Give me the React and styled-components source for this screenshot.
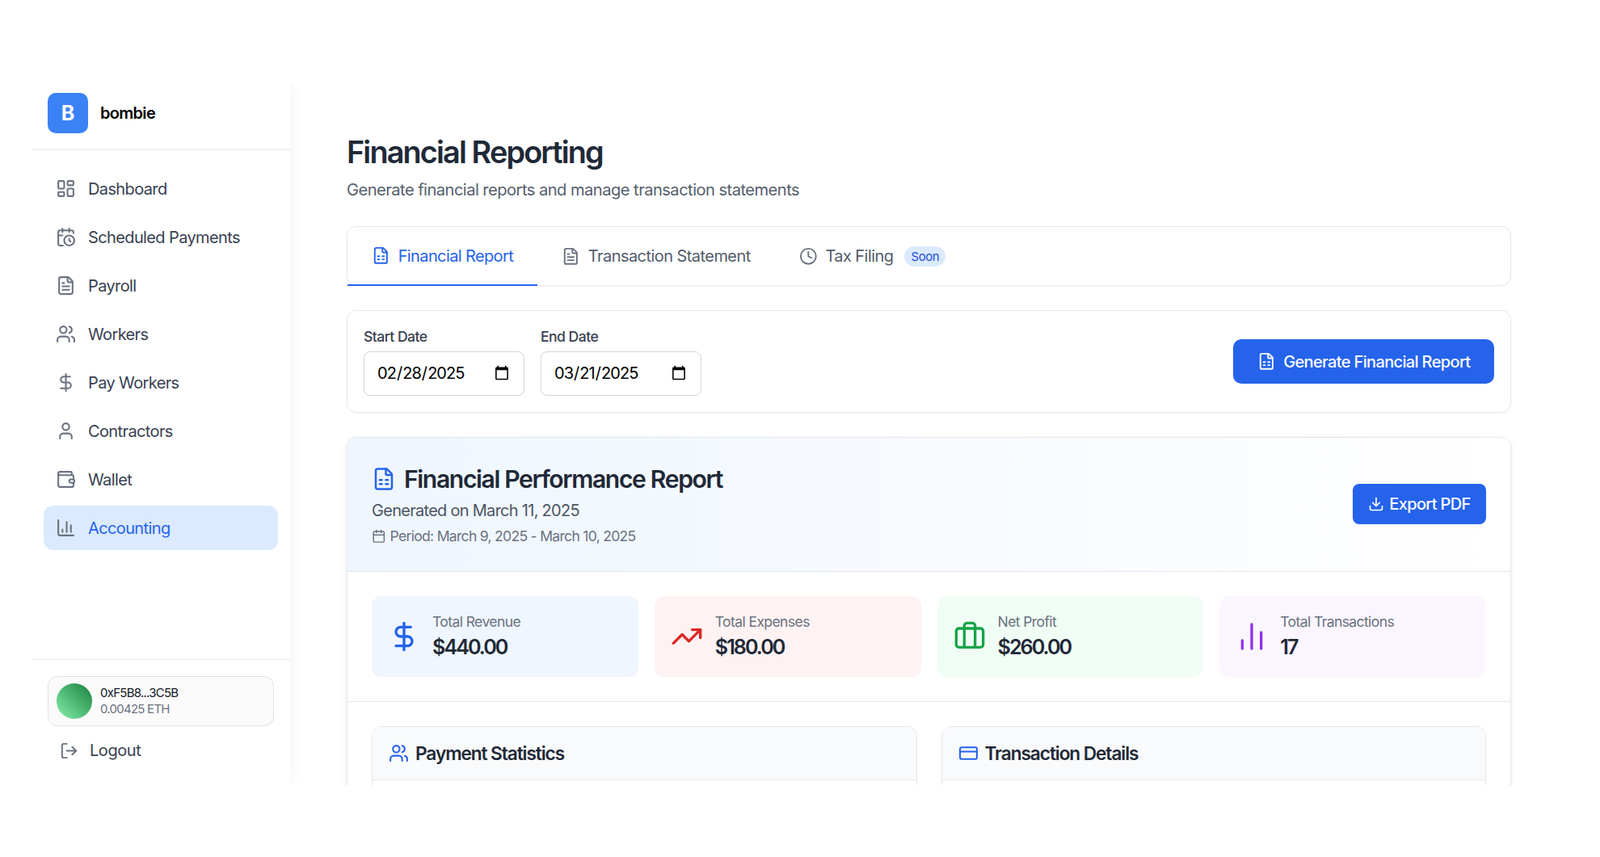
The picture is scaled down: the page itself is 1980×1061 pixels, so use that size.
import React from "react";
import styled, { createGlobalStyle } from "styled-components";
import {
  LayoutDashboard, CalendarClock, FileText, Users, DollarSign, User, Wallet,
  ChartColumn, LogOut, FileSpreadsheet, Clock, Calendar, Download, TrendingUp,
  Briefcase, ChartNoAxesColumn, CreditCard,
} from "lucide-react";

const Global = createGlobalStyle`
  html, body { margin: 0; padding: 0; background: #fff; overflow: hidden; }
  * { box-sizing: border-box; }
  body { font-family: Inter, "Liberation Sans", sans-serif; color: #1f2937; }
`;

const Frame = styled.div`
  display: flex;
  width: 1901px;
  height: 869px;
  margin: 103px 40px 89px 39px;
  overflow: hidden;
  background: #fff;
`;

const Sidebar = styled.aside`
  width: 320px;
  flex: none;
  display: flex;
  flex-direction: column;
  background: #fff;
  box-shadow: 0 0 16px rgba(0, 0, 0, 0.06);
  position: relative;
`;

const Brand = styled.div`
  display: flex;
  align-items: center;
  gap: 15px;
  padding: 12px 20px 20px;
  border-bottom: 1px solid #e5e7eb;
`;

const LogoMark = styled.div`
  width: 50px;
  height: 50px;
  border-radius: 10px;
  background: #3b82f6;
  color: #fff;
  font-size: 25px;
  font-weight: 700;
  display: flex;
  align-items: center;
  justify-content: center;
`;

const BrandName = styled.span`
  font-size: 20px;
  font-weight: 600;
  letter-spacing: -0.7px;
  color: #000;
`;

const Nav = styled.nav`
  display: flex;
  flex-direction: column;
  gap: 5px;
  padding: 20px 15px;
`;

const NavItem = styled.a`
  display: flex;
  align-items: center;
  gap: 15px;
  height: 55px;
  padding: 0 15px;
  border-radius: 12px;
  font-size: 20px;
  letter-spacing: -0.62px;
  color: ${(p) => (p.$active ? "#2563eb" : "#374151")};
  background: ${(p) => (p.$active ? "#dbeafe" : "transparent")};
  svg { color: #6b7280; flex: none; }
`;

const SideFooter = styled.div`
  margin-top: auto;
  border-top: 1px solid #e5e7eb;
  padding: 20px 20px 23px;
  display: flex;
  flex-direction: column;
  gap: 10px;
`;

const WalletCard = styled.div`
  height: 62px;
  display: flex;
  align-items: center;
  gap: 10px;
  padding: 0 10px;
  border: 1px solid #e0e0e6;
  border-radius: 12px;
  background: #fbfbfc;
`;

const Avatar = styled.div`
  width: 44px;
  height: 44px;
  border-radius: 50%;
  background: linear-gradient(45deg, #86efac, #16803c);
`;

const WalletText = styled.div`
  font-size: 15px;
  line-height: 20px;
  letter-spacing: -0.75px;
`;

const Address = styled.div`
  color: #111827;
`;

const Balance = styled.div`
  color: #6b7280;
`;

const LogoutRow = styled.button`
  height: 40px;
  display: flex;
  align-items: center;
  gap: 14px;
  padding: 0 0 0 15px;
  border: none;
  background: none;
  font: inherit;
  font-size: 20px;
  letter-spacing: -0.45px;
  color: #374151;
  svg { color: #6b7280; }
`;

const Main = styled.main`
  flex: 1;
  min-width: 0;
  padding: 63px 70px 0;
`;

const Title = styled.h1`
  margin: 0 0 10px;
  font-size: 37.8px;
  line-height: 45.5px;
  font-weight: 600;
  letter-spacing: -1.85px;
  color: #1f2937;
`;

const Subtitle = styled.p`
  margin: 0 0 33px;
  font-size: 20.2px;
  line-height: 25.5px;
  letter-spacing: -0.57px;
  color: #565f6d;
`;

const Card = styled.section`
  background: #fff;
  border: 1px solid #e5e7eb;
  border-radius: 12px;
  box-shadow: 0 1px 3px rgba(0, 0, 0, 0.04);
  margin-bottom: 30px;
`;

const TabsCard = styled(Card)`
  display: flex;
  height: 74px;
`;

const Tab = styled.div`
  display: flex;
  align-items: center;
  gap: 10px;
  padding: 0 30px;
  font-size: 20px;
  letter-spacing: ${(p) => (p.$active ? "-0.62px" : "-0.56px")};
  color: ${(p) => (p.$active ? "#2563eb" : "#525c6b")};
  border-bottom: ${(p) => (p.$active ? "2.5px solid #2563eb" : "none")};
  margin-bottom: ${(p) => (p.$active ? "-1px" : "0")};
  svg { color: ${(p) => (p.$active ? "#2563eb" : "#6b7280")}; flex: none; }
`;

const SoonBadge = styled.span`
  margin-left: 4px;
  height: 25px;
  padding: 0 8px;
  display: flex;
  align-items: center;
  border-radius: 13px;
  background: #dbeafe;
  color: #1d4ed8;
  font-size: 15px;
  letter-spacing: -0.4px;
`;

const FilterCard = styled(Card)`
  height: 127px;
  padding: 0 20px;
  display: flex;
  align-items: center;
  justify-content: space-between;
`;

const Fields = styled.div`
  display: flex;
  gap: 20px;
`;

const Field = styled.label`
  display: flex;
  flex-direction: column;
  gap: 7px;
  font-size: 17.6px;
  line-height: 22px;
  font-weight: 500;
  letter-spacing: -0.55px;
  color: #374151;
`;

const DateInput = styled.input`
  width: 199px;
  height: 55px;
  padding: 0 15px;
  border: 1px solid #d1d5db;
  border-radius: 8px;
  background: #fff;
  font-family: Inter, sans-serif;
  font-size: 20px;
  letter-spacing: -0.95px;
  color: #000;
`;

const PrimaryButton = styled.button`
  display: flex;
  align-items: center;
  justify-content: center;
  border: none;
  background: #2563eb;
  color: #fff;
  font-family: inherit;
  font-size: 20px;
  font-weight: 500;
  letter-spacing: -0.65px;
`;

const GenerateButton = styled(PrimaryButton)`
  width: 323px;
  height: 55px;
  gap: 10px;
  border-radius: 10px;
`;

const ExportButton = styled(PrimaryButton)`
  width: 165px;
  height: 50px;
  gap: 6px;
  border-radius: 8px;
  margin-bottom: 2px;
`;

const ReportCard = styled(Card)`
  min-height: 700px;
  box-shadow: 0 2px 8px rgba(0, 0, 0, 0.07);
  overflow: hidden;
`;

const ReportHeader = styled.header`
  height: 166px;
  padding: 0 30px;
  display: flex;
  align-items: center;
  justify-content: space-between;
  border-bottom: 1px solid #e5e7eb;
  background: linear-gradient(to right, #eff6ff, #ffffff);
`;

const HeaderText = styled.div`
  display: flex;
  flex-direction: column;
  padding-bottom: 2px;
`;

const ReportTitle = styled.h2`
  margin: 0 0 7px;
  display: flex;
  align-items: center;
  gap: 10px;
  font-size: 30.2px;
  line-height: 40px;
  font-weight: 600;
  letter-spacing: -1.4px;
  color: #1f2937;
  svg { color: #2563eb; }
`;

const Generated = styled.div`
  margin-bottom: 8px;
  font-size: 20px;
  line-height: 25px;
  letter-spacing: -0.72px;
  color: #4b5563;
`;

const Period = styled.div`
  display: flex;
  align-items: center;
  gap: 5px;
  font-size: 17.6px;
  line-height: 22px;
  letter-spacing: -0.73px;
  color: #6b7280;
`;

const StatsRow = styled.div`
  display: grid;
  grid-template-columns: repeat(4, 1fr);
  gap: 20px;
  padding: 30px;
  border-bottom: 1px solid #e5e7eb;
`;

const Stat = styled.div`
  height: 100px;
  display: flex;
  align-items: center;
  gap: 15px;
  padding: 0 20px;
  border-radius: 12px;
  background: ${(p) => p.$bg};
  svg { color: ${(p) => p.$fg}; flex: none; }
`;

const StatText = styled.div`
  display: flex;
  flex-direction: column;
  gap: 4px;
`;

const StatLabel = styled.div`
  font-size: 17.6px;
  line-height: 22px;
  letter-spacing: -0.63px;
  color: #6b7280;
`;

const StatValue = styled.div`
  font-size: 25.2px;
  line-height: 32px;
  font-weight: 600;
  letter-spacing: -2px;
  color: #1f2937;
`;

const Panels = styled.div`
  display: grid;
  grid-template-columns: 1fr 1fr;
  gap: 30px;
  padding: 30px;
`;

const Panel = styled.div`
  min-height: 300px;
  border: 1px solid #e5e7eb;
  border-radius: 12px;
  overflow: hidden;
`;

const PanelHeader = styled.div`
  height: 66px;
  display: flex;
  align-items: center;
  gap: 8px;
  padding: 0 20px;
  background: #f9fafb;
  border-bottom: 1px solid #e5e7eb;
  font-size: 22.7px;
  font-weight: 600;
  letter-spacing: -1.1px;
  color: #1f2937;
  svg { color: #2563eb; flex: none; }
`;

const navItems = [
  [LayoutDashboard, "Dashboard"],
  [CalendarClock, "Scheduled Payments"],
  [FileText, "Payroll"],
  [Users, "Workers"],
  [DollarSign, "Pay Workers"],
  [User, "Contractors"],
  [Wallet, "Wallet"],
  [ChartColumn, "Accounting", true],
];

const stats = [
  [DollarSign, "Total Revenue", "$440.00", "#eff6ff", "#2563eb"],
  [TrendingUp, "Total Expenses", "$180.00", "#fef2f2", "#dc2626"],
  [Briefcase, "Net Profit", "$260.00", "#f0fdf4", "#16a34a"],
  [ChartNoAxesColumn, "Total Transactions", "17", "#faf5ff", "#9333ea"],
];

export default function App() {
  return (
    <>
      <Global />
      <Frame>
        <Sidebar>
          <Brand>
            <LogoMark>B</LogoMark>
            <BrandName>bombie</BrandName>
          </Brand>
          <Nav>
            {navItems.map(([Icon, label, active]) => (
              <NavItem key={label} $active={active}>
                <Icon size={25} />
                {label}
              </NavItem>
            ))}
          </Nav>
          <SideFooter>
            <WalletCard>
              <Avatar />
              <WalletText>
                <Address>0xF5B8...3C5B</Address>
                <Balance>0.00425 ETH</Balance>
              </WalletText>
            </WalletCard>
            <LogoutRow>
              <LogOut size={23} />
              Logout
            </LogoutRow>
          </SideFooter>
        </Sidebar>
        <Main>
          <Title>Financial Reporting</Title>
          <Subtitle>Generate financial reports and manage transaction statements</Subtitle>
          <TabsCard>
            <Tab $active>
              <FileSpreadsheet size={22.7} />
              Financial Report
            </Tab>
            <Tab>
              <FileText size={22.7} />
              Transaction Statement
            </Tab>
            <Tab>
              <Clock size={22.7} />
              Tax Filing
              <SoonBadge>Soon</SoonBadge>
            </Tab>
          </TabsCard>
          <FilterCard>
            <Fields>
              <Field>
                Start Date
                <DateInput type="date" defaultValue="2025-02-28" />
              </Field>
              <Field>
                End Date
                <DateInput type="date" defaultValue="2025-03-21" />
              </Field>
            </Fields>
            <GenerateButton>
              <FileSpreadsheet size={22.7} />
              Generate Financial Report
            </GenerateButton>
          </FilterCard>
          <ReportCard>
            <ReportHeader>
              <HeaderText>
                <ReportTitle>
                  <FileSpreadsheet size={30} />
                  Financial Performance Report
                </ReportTitle>
                <Generated>Generated on March 11, 2025</Generated>
                <Period>
                  <Calendar size={17.6} />
                  Period: March 9, 2025 - March 10, 2025
                </Period>
              </HeaderText>
              <ExportButton>
                <Download size={20} />
                Export PDF
              </ExportButton>
            </ReportHeader>
            <StatsRow>
              {stats.map(([Icon, label, value, bg, fg]) => (
                <Stat key={label} $bg={bg} $fg={fg}>
                  <Icon size={40} />
                  <StatText>
                    <StatLabel>{label}</StatLabel>
                    <StatValue>{value}</StatValue>
                  </StatText>
                </Stat>
              ))}
            </StatsRow>
            <Panels>
              <Panel>
                <PanelHeader>
                  <Users size={25} />
                  Payment Statistics
                </PanelHeader>
              </Panel>
              <Panel>
                <PanelHeader>
                  <CreditCard size={25} />
                  Transaction Details
                </PanelHeader>
              </Panel>
            </Panels>
          </ReportCard>
        </Main>
      </Frame>
    </>
  );
}
